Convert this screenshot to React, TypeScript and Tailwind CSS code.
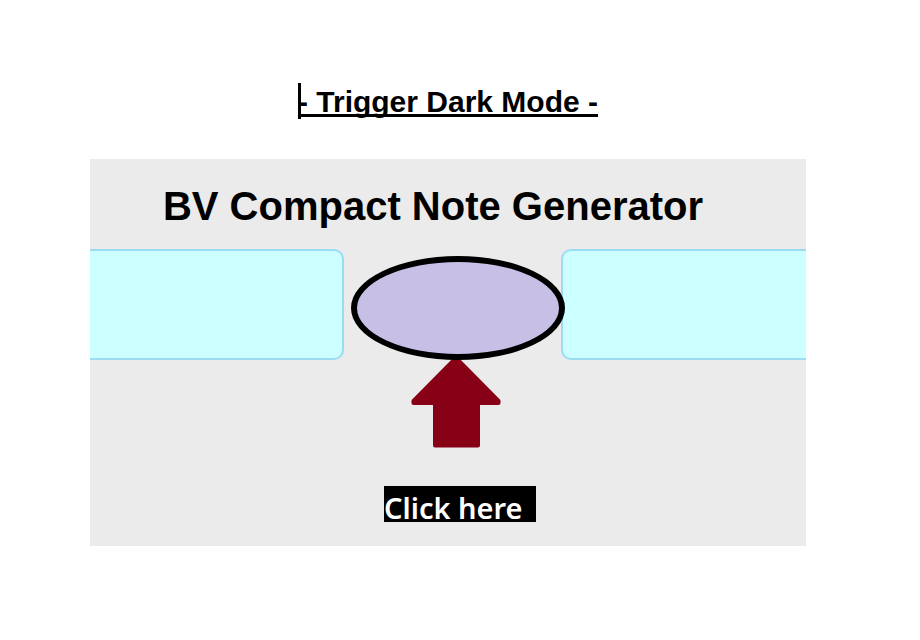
export default function App() {
  return (
    <main className="min-h-screen bg-white pt-[82px] pr-[114px] pb-8 pl-[90px] font-['Liberation_Sans',Arial,sans-serif] text-black">
      <h1 className="text-center text-[30px] leading-10 font-bold">
        <span className="relative inline-block underline decoration-[3px] underline-offset-2 [text-decoration-skip-ink:none]">
          - Trigger Dark Mode -
          <span className="absolute top-px left-0 h-9 w-[3px] bg-black" aria-hidden="true" />
        </span>
      </h1>

      <section className="mt-[37px] bg-[#ebebeb] pt-[23px] pb-6">
        <h2 className="pr-[30px] text-center text-[40px] leading-[48px] font-bold">
          BV Compact Note Generator
        </h2>

        <div className="mt-[19px] grid h-[109px] grid-cols-[254fr_217fr_245fr]">
          <div className="rounded-r-[10px] border-2 border-l-0 border-[#9bdcf3] bg-[#ccffff]" />
          <div className="relative z-10 -mr-1 pt-[7px] pl-[7px]">
            <button
              type="button"
              aria-label="Trigger dark mode"
              className="block h-[104px] w-full rounded-[50%] border-[6px] border-black bg-[#c8bfe7]"
            />
          </div>
          <div className="rounded-l-[10px] border-2 border-r-0 border-[#9bdcf3] bg-[#ccffff]" />
        </div>

        <div className="flex flex-col items-center pl-4">
          <svg className="-mt-[3px] h-[94px] w-[92px]" viewBox="0 0 92 94" aria-hidden="true">
            <path
              d="M46 3 L88.5 46 V48 H68 V90.5 H25 V48 H3.500 V46 Z"
              fill="#880015"
              stroke="#880015"
              strokeWidth="4"
              strokeLinejoin="round"
            />
          </svg>
        </div>
        <div className="flex justify-center pl-6">
          <p className="mt-[37px] h-9 w-[152px] bg-black font-['Noto_Sans',sans-serif] text-[29px] leading-[43px] font-semibold text-white">
            Click here
          </p>
        </div>
      </section>
    </main>
  );
}
